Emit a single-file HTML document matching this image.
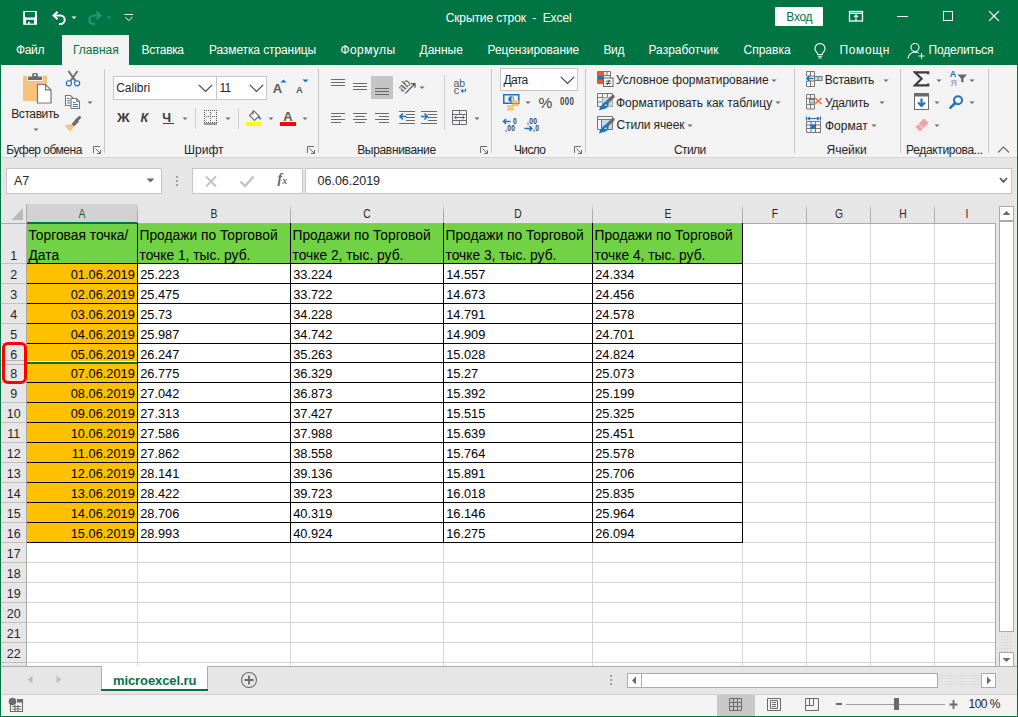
<!DOCTYPE html><html><head><meta charset="utf-8"><style>
html,body{margin:0;padding:0;}
body{width:1018px;height:717px;position:relative;overflow:hidden;background:#017443;font-family:"Liberation Sans", sans-serif;}
.a{position:absolute;}
.t{position:absolute;white-space:pre;line-height:1;}
</style></head><body>
<svg class="a" style="left:22px;top:10px;" width="16" height="16" viewBox="0 0 16 16"><rect x="1.2" y="1" width="13.8" height="13.8" fill="#fff"/><path d="M3 2 H13 V6.5 Q13 7.5 12 7.5 H4 Q3 7.5 3 6.5 Z" fill="#017443"/><rect x="4" y="9.8" width="8" height="3.8" fill="#017443"/><rect x="6" y="11.8" width="2" height="2" fill="#fff"/></svg>
<svg class="a" style="left:51px;top:10px;" width="17" height="15" viewBox="0 0 17 15"><path d="M3 5.5 H9.5 A4.2 4.2 0 0 1 9.5 13.9 H8" fill="none" stroke="#fff" stroke-width="2"/><path d="M6.5 1.8 L2.6 5.5 L6.5 9.2" fill="none" stroke="#fff" stroke-width="2"/></svg>
<svg class="a" style="left:71px;top:16px;" width="6" height="4" viewBox="0 0 6 4"><path d="M0.5 0.5 L5.5 0.5 L3.0 3.0 Z" fill="#fff"/></svg>
<svg class="a" style="left:86px;top:10px;" width="17" height="15" viewBox="0 0 17 15"><path d="M14 5.5 H7.5 A4.2 4.2 0 0 0 7.5 13.9 H9" fill="none" stroke="#1f9a78" stroke-width="2.1"/><path d="M10.5 1.8 L14.4 5.5 L10.5 9.2" fill="none" stroke="#1f9a78" stroke-width="2.1"/></svg>
<svg class="a" style="left:106px;top:16px;" width="6" height="4" viewBox="0 0 6 4"><path d="M0.5 0.5 L5.5 0.5 L3.0 3.0 Z" fill="#1f9a78"/></svg>
<svg class="a" style="left:124px;top:13px;" width="10" height="9" viewBox="0 0 10 9"><path d="M0.5 1.5 H9" stroke="#fff" stroke-width="0.9"/><path d="M1 4 L4.75 7.6 L8.5 4" fill="none" stroke="#fff" stroke-width="1"/></svg>
<div class="t" style="left:408.6px;width:200px;top:12.43px;font-size:12px;color:#fff;font-weight:400;text-align:center;letter-spacing:-0.1px;">Скрытие строк  -  Excel</div>
<div class="a" style="left:775px;top:7px;width:48px;height:19px;background:#fff;border-radius:1px;"></div>
<div class="t" style="left:699.3px;width:200px;top:11.43px;font-size:12px;color:#017443;font-weight:400;text-align:center;letter-spacing:-0.3px;">Вход</div>
<svg class="a" style="left:848px;top:10px;" width="16" height="12" viewBox="0 0 16 12"><rect x="1.5" y="1.5" width="13" height="9.5" fill="none" stroke="#fff" stroke-width="1.3"/><path d="M1.5 3.3 H14.5" stroke="#fff" stroke-width="1.2"/><path d="M8 11 V5 M6 7 L8 5 L10 7" fill="none" stroke="#fff" stroke-width="1.1"/></svg>
<div class="a" style="left:897px;top:16px;width:11px;height:1px;background:#fff;"></div>
<div class="a" style="left:943px;top:11px;width:10px;height:10px;border:1px solid #fff;box-sizing:border-box;"></div>
<svg class="a" style="left:988px;top:10px;" width="12" height="12" viewBox="0 0 12 12"><path d="M1 1 L11 11 M11 1 L1 11" stroke="#fff" stroke-width="1.1"/></svg>
<div class="a" style="left:62px;top:35px;width:67px;height:30px;background:#f3f3f3;"></div>
<div class="t" style="left:15.899999999999999px;top:44.23px;font-size:12px;color:#fff;font-weight:400;letter-spacing:-0.3px;">Файл</div>
<div class="t" style="left:73.0px;top:44.23px;font-size:12px;color:#017443;font-weight:400;">Главная</div>
<div class="t" style="left:141.5px;top:44.23px;font-size:12px;color:#fff;font-weight:400;letter-spacing:-0.35px;">Вставка</div>
<div class="t" style="left:208.9px;top:44.23px;font-size:12px;color:#fff;font-weight:400;letter-spacing:-0.1px;">Разметка страницы</div>
<div class="t" style="left:340.5px;top:44.23px;font-size:12px;color:#fff;font-weight:400;letter-spacing:0.4px;">Формулы</div>
<div class="t" style="left:419.5px;top:44.23px;font-size:12px;color:#fff;font-weight:400;">Данные</div>
<div class="t" style="left:487.5px;top:44.23px;font-size:12px;color:#fff;font-weight:400;letter-spacing:-0.07px;">Рецензирование</div>
<div class="t" style="left:603.5px;top:44.23px;font-size:12px;color:#fff;font-weight:400;letter-spacing:-0.4px;">Вид</div>
<div class="t" style="left:648.5px;top:44.23px;font-size:12px;color:#fff;font-weight:400;">Разработчик</div>
<div class="t" style="left:743.5px;top:44.23px;font-size:12px;color:#fff;font-weight:400;">Справка</div>
<div class="t" style="left:839.5px;top:44.23px;font-size:12px;color:#fff;font-weight:400;letter-spacing:0.65px;">Помощн</div>
<div class="t" style="left:928.5px;top:44.23px;font-size:12px;color:#fff;font-weight:400;letter-spacing:-0.15px;">Поделиться</div>
<svg class="a" style="left:812px;top:42px;" width="16" height="18" viewBox="0 0 16 18"><path d="M8 1.5 A5 5 0 0 1 11.2 10.3 Q10.3 11.2 10.3 12.5 H5.7 Q5.7 11.2 4.8 10.3 A5 5 0 0 1 8 1.5 Z" fill="none" stroke="#fff" stroke-width="1.1"/><path d="M5.8 14.2 H10.2 M6.5 16 H9.5" stroke="#fff" stroke-width="1.1"/></svg>
<svg class="a" style="left:907px;top:42px;" width="19" height="18" viewBox="0 0 19 18"><circle cx="8" cy="5.5" r="4" fill="none" stroke="#fff" stroke-width="1.1"/><path d="M1 16.5 Q2 10.5 8 10 Q10 10 11.5 11" fill="none" stroke="#fff" stroke-width="1.1"/><path d="M14.5 11 V17 M11.5 14 H17.5" stroke="#fff" stroke-width="1.1"/></svg>
<div class="a" style="left:1px;top:65px;width:1016px;height:92px;background:#f3f3f3;"></div>
<div class="a" style="left:1px;top:157px;width:1016px;height:1px;background:#d5d5d5;"></div>
<div class="a" style="left:1px;top:158px;width:1016px;height:46px;background:#e6e6e6;"></div>
<div class="a" style="left:104px;top:69px;width:1px;height:84px;background:#c8c8c8;"></div>
<div class="a" style="left:318px;top:69px;width:1px;height:84px;background:#c8c8c8;"></div>
<div class="a" style="left:491px;top:69px;width:1px;height:84px;background:#c8c8c8;"></div>
<div class="a" style="left:585px;top:69px;width:1px;height:84px;background:#c8c8c8;"></div>
<div class="a" style="left:794px;top:69px;width:1px;height:84px;background:#c8c8c8;"></div>
<div class="a" style="left:900px;top:69px;width:1px;height:84px;background:#c8c8c8;"></div>
<div class="a" style="left:988px;top:69px;width:1px;height:84px;background:#c8c8c8;"></div>
<div class="t" style="left:6.3px;top:143.93px;font-size:12px;color:#262626;font-weight:400;letter-spacing:-0.5px;">Буфер обмена</div>
<div class="t" style="left:184.0px;top:143.93px;font-size:12px;color:#262626;font-weight:400;">Шрифт</div>
<div class="t" style="left:357.2px;top:143.93px;font-size:12px;color:#262626;font-weight:400;letter-spacing:-0.33px;">Выравнивание</div>
<div class="t" style="left:514.0px;top:143.93px;font-size:12px;color:#262626;font-weight:400;letter-spacing:-0.65px;">Число</div>
<div class="t" style="left:674.0px;top:143.93px;font-size:12px;color:#262626;font-weight:400;letter-spacing:-0.6px;">Стили</div>
<div class="t" style="left:826.5px;top:143.93px;font-size:12px;color:#262626;font-weight:400;">Ячейки</div>
<div class="t" style="left:906.0px;top:143.93px;font-size:12px;color:#262626;font-weight:400;letter-spacing:-0.33px;">Редактирова...</div>
<svg class="a" style="left:93px;top:146px;" width="9" height="8" viewBox="0 0 9 8"><path d="M0.5 7 V0.5 H7" fill="none" stroke="#6a6a6a" stroke-width="1"/><path d="M2.5 2.5 L7.5 7.5 M4 7.5 H7.5 V4" fill="none" stroke="#6a6a6a" stroke-width="1"/></svg>
<svg class="a" style="left:307px;top:146px;" width="9" height="8" viewBox="0 0 9 8"><path d="M0.5 7 V0.5 H7" fill="none" stroke="#6a6a6a" stroke-width="1"/><path d="M2.5 2.5 L7.5 7.5 M4 7.5 H7.5 V4" fill="none" stroke="#6a6a6a" stroke-width="1"/></svg>
<svg class="a" style="left:480px;top:146px;" width="9" height="8" viewBox="0 0 9 8"><path d="M0.5 7 V0.5 H7" fill="none" stroke="#6a6a6a" stroke-width="1"/><path d="M2.5 2.5 L7.5 7.5 M4 7.5 H7.5 V4" fill="none" stroke="#6a6a6a" stroke-width="1"/></svg>
<svg class="a" style="left:574px;top:146px;" width="9" height="8" viewBox="0 0 9 8"><path d="M0.5 7 V0.5 H7" fill="none" stroke="#6a6a6a" stroke-width="1"/><path d="M2.5 2.5 L7.5 7.5 M4 7.5 H7.5 V4" fill="none" stroke="#6a6a6a" stroke-width="1"/></svg>
<svg class="a" style="left:22px;top:72px;" width="31" height="32" viewBox="0 0 31 32"><rect x="1" y="3.8" width="24" height="25.2" rx="1" fill="#f7c37b"/>
<rect x="5.2" y="3" width="15.6" height="6" fill="#f3f3f3"/>
<rect x="6" y="4.4" width="14" height="3.6" rx="0.8" fill="#6a6a6a"/>
<rect x="10.2" y="1" width="5.6" height="4.5" rx="1.5" fill="#6a6a6a"/><rect x="12" y="2.2" width="2" height="1.8" fill="#f3f3f3"/>
<path d="M15.5 12.5 H23.5 L29 18 V31 H15.5 Z" fill="#fff" stroke="#777" stroke-width="1.2"/>
<path d="M23.5 12.5 V17.8 H29" fill="none" stroke="#777" stroke-width="1.2"/></svg>
<div class="t" style="left:11.2px;top:107.73px;font-size:12px;color:#262626;font-weight:400;letter-spacing:-0.4px;">Вставить</div>
<svg class="a" style="left:33px;top:128px;" width="6" height="4" viewBox="0 0 6 4"><path d="M0.5 0.5 L5.5 0.5 L3.0 3.0 Z" fill="#6a6a6a"/></svg>
<svg class="a" style="left:65px;top:70px;" width="16" height="17" viewBox="0 0 16 17"><path d="M3.5 1 L10.5 11 M12.5 1 L5.5 11" stroke="#707070" stroke-width="2"/><circle cx="3.9" cy="13.3" r="2.6" fill="#f3f3f3" stroke="#1e73be" stroke-width="1.1"/><circle cx="12.1" cy="13.3" r="2.6" fill="#f3f3f3" stroke="#1e73be" stroke-width="1.1"/></svg>
<svg class="a" style="left:64px;top:94px;" width="17" height="16" viewBox="0 0 17 16"><path d="M1.5 1.5 H6.5 L8.5 3.5 V11.5 H1.5 Z" fill="#fff" stroke="#777" stroke-width="1.1"/>
<path d="M3 4.5 H5.5 M3 6.8 H6.5 M3 9 H6.5" stroke="#1e73be" stroke-width="0.9"/>
<path d="M7 4.5 H12.5 L15.5 7.5 V14.5 H7 Z" fill="#fff" stroke="#777" stroke-width="1.1"/>
<path d="M12.5 4.5 V7.5 H15.5" fill="none" stroke="#777" stroke-width="0.9"/>
<path d="M9 8.5 H11.5 M9 10.5 H14 M9 12.5 H14" stroke="#1e73be" stroke-width="0.9"/></svg>
<svg class="a" style="left:87px;top:101px;" width="6" height="4" viewBox="0 0 6 4"><path d="M0.5 0.5 L5.5 0.5 L3.0 3.0 Z" fill="#6a6a6a"/></svg>
<svg class="a" style="left:64px;top:116px;" width="18" height="17" viewBox="0 0 18 17"><path d="M15.5 1.5 L12 5" stroke="#6a6a6a" stroke-width="3" stroke-linecap="round"/><path d="M12.5 3 L15 5.5 L10 10.5 L7.5 8 Z" fill="#6a6a6a"/><path d="M7.5 8 L10 10.5 L6 16 L0.8 9.5 Z" fill="#f7c37b"/></svg>
<div class="a" style="left:113px;top:76px;width:104px;height:24px;background:#fff;border:1px solid #c6c6c6;box-sizing:border-box;"></div>
<div class="a" style="left:216px;top:76px;width:51px;height:24px;background:#fff;border:1px solid #c6c6c6;box-sizing:border-box;"></div>
<div class="t" style="left:116.2px;top:81.73px;font-size:12px;color:#262626;font-weight:400;">Calibri</div>
<div class="t" style="left:219.5px;top:81.73px;font-size:12px;color:#262626;font-weight:400;letter-spacing:-0.8px;">11</div>
<svg class="a" style="left:197.5px;top:84px;" width="15" height="9" viewBox="0 0 15 9"><path d="M0.8 0.8 L7.5 7.5 L14.2 0.8" fill="none" stroke="#444" stroke-width="1.2"/></svg>
<svg class="a" style="left:249.0px;top:84px;" width="15" height="9" viewBox="0 0 15 9"><path d="M0.8 0.8 L7.5 7.5 L14.2 0.8" fill="none" stroke="#444" stroke-width="1.2"/></svg>
<div class="t" style="left:272.8px;top:81.90px;font-size:13px;color:#5a5a5a;font-weight:700;">A</div>
<svg class="a" style="left:280px;top:79px;" width="7" height="4" viewBox="0 0 7 4"><path d="M0.5 3.5 L3.5 0.5 L6.5 3.5 Z" fill="#1e73be"/></svg>
<div class="t" style="left:296px;top:84.76px;font-size:9.5px;color:#5a5a5a;font-weight:700;">A</div>
<svg class="a" style="left:302px;top:79px;" width="7" height="4" viewBox="0 0 7 4"><path d="M0.5 0.5 L6.5 0.5 L3.5 3.5 Z" fill="#1e73be"/></svg>
<div class="t" style="left:117.3px;top:111.67px;font-size:12.5px;color:#3c3c3c;font-weight:700;transform:scaleX(1.12);transform-origin:0 0;">Ж</div>
<div class="t" style="left:140.5px;top:111.67px;font-size:12.5px;color:#3c3c3c;font-weight:700;font-style:italic;">К</div>
<div class="t" style="left:162.3px;top:111.67px;font-size:12.5px;color:#3c3c3c;font-weight:700;">Ч</div>
<div class="a" style="left:162.5px;top:123px;width:11px;height:1.2px;background:#3c3c3c;"></div>
<svg class="a" style="left:181.5px;top:117px;" width="6" height="4" viewBox="0 0 6 4"><path d="M0.5 0.5 L5.5 0.5 L3.0 3.0 Z" fill="#6a6a6a"/></svg>
<div class="a" style="left:195px;top:108px;width:1px;height:21px;background:#d0d0d0;"></div>
<svg class="a" style="left:204px;top:110px;" width="14" height="15" viewBox="0 0 14 15"><path d="M0 0.5 H14 M0 6.5 H14 M0 12.5 H14 M0.5 0 V13 M6.5 0 V13 M12.5 0 V13" fill="none" stroke="#555" stroke-width="1" stroke-dasharray="1 1"/><path d="M0 14 H13" stroke="#6a6a6a" stroke-width="1.3"/></svg>
<svg class="a" style="left:225px;top:117px;" width="6" height="4" viewBox="0 0 6 4"><path d="M0.5 0.5 L5.5 0.5 L3.0 3.0 Z" fill="#6a6a6a"/></svg>
<div class="a" style="left:238px;top:108px;width:1px;height:21px;background:#d0d0d0;"></div>
<svg class="a" style="left:245px;top:109px;" width="18" height="18" viewBox="0 0 18 18"><path d="M4.5 6.5 L9 2 L14 7 L9.5 11.5 Z" fill="#fff" stroke="#6a6a6a" stroke-width="1.1"/><path d="M8 1.5 V6" stroke="#6a6a6a" stroke-width="1"/><path d="M14.5 7 Q16.5 9 15.5 11 Q14 9.5 13 9" fill="#1e73be"/><rect x="0.8" y="13" width="16" height="4" fill="#ffff00"/></svg>
<svg class="a" style="left:267.5px;top:117px;" width="6" height="4" viewBox="0 0 6 4"><path d="M0.5 0.5 L5.5 0.5 L3.0 3.0 Z" fill="#6a6a6a"/></svg>
<div class="t" style="left:283.3px;top:110.30px;font-size:13px;color:#5a5a5a;font-weight:700;">A</div>
<div class="a" style="left:280px;top:122px;width:16px;height:4px;background:#ff0000;"></div>
<svg class="a" style="left:301.5px;top:117px;" width="6" height="4" viewBox="0 0 6 4"><path d="M0.5 0.5 L5.5 0.5 L3.0 3.0 Z" fill="#6a6a6a"/></svg>
<div class="a" style="left:331px;top:78.5px;width:14px;height:1.3px;background:#6a6a6a;"></div>
<div class="a" style="left:331px;top:81.5px;width:14px;height:1.3px;background:#6a6a6a;"></div>
<div class="a" style="left:331px;top:84.5px;width:14px;height:1.3px;background:#6a6a6a;"></div>
<div class="a" style="left:353px;top:82.5px;width:14px;height:1.3px;background:#6a6a6a;"></div>
<div class="a" style="left:353px;top:85.5px;width:14px;height:1.3px;background:#6a6a6a;"></div>
<div class="a" style="left:353px;top:88.5px;width:14px;height:1.3px;background:#6a6a6a;"></div>
<div class="a" style="left:371px;top:76px;width:22px;height:23px;background:#c5c5c5;"></div>
<div class="a" style="left:375px;top:87.5px;width:14px;height:1.3px;background:#6a6a6a;"></div>
<div class="a" style="left:375px;top:90.5px;width:14px;height:1.3px;background:#6a6a6a;"></div>
<div class="a" style="left:375px;top:93.5px;width:14px;height:1.3px;background:#6a6a6a;"></div>
<svg class="a" style="left:397px;top:77px;" width="20" height="19" viewBox="0 0 20 19"><text transform="translate(5.2,15.6) rotate(-45)" font-family="Liberation Sans" font-size="11.5" fill="#555">ab</text><path d="M8.2 16.6 L17.6 7 M13.8 6.6 H18 V10.8" fill="none" stroke="#555" stroke-width="1.2"/></svg>
<svg class="a" style="left:419px;top:86px;" width="6" height="4" viewBox="0 0 6 4"><path d="M0.5 0.5 L5.5 0.5 L3.0 3.0 Z" fill="#6a6a6a"/></svg>
<div class="a" style="left:331px;top:112.5px;width:14px;height:1.3px;background:#6a6a6a;"></div>
<div class="a" style="left:331px;top:115.5px;width:10px;height:1.3px;background:#6a6a6a;"></div>
<div class="a" style="left:331px;top:118.5px;width:14px;height:1.3px;background:#6a6a6a;"></div>
<div class="a" style="left:331px;top:121.5px;width:10px;height:1.3px;background:#6a6a6a;"></div>
<div class="a" style="left:353px;top:112.5px;width:14px;height:1.3px;background:#6a6a6a;"></div>
<div class="a" style="left:355px;top:115.5px;width:10px;height:1.3px;background:#6a6a6a;"></div>
<div class="a" style="left:353px;top:118.5px;width:14px;height:1.3px;background:#6a6a6a;"></div>
<div class="a" style="left:355px;top:121.5px;width:10px;height:1.3px;background:#6a6a6a;"></div>
<div class="a" style="left:375px;top:112.5px;width:14px;height:1.3px;background:#6a6a6a;"></div>
<div class="a" style="left:379px;top:115.5px;width:10px;height:1.3px;background:#6a6a6a;"></div>
<div class="a" style="left:375px;top:118.5px;width:14px;height:1.3px;background:#6a6a6a;"></div>
<div class="a" style="left:379px;top:121.5px;width:10px;height:1.3px;background:#6a6a6a;"></div>
<div class="a" style="left:399px;top:110.5px;width:16px;height:1.3px;background:#6a6a6a;"></div>
<div class="a" style="left:399px;top:122.5px;width:16px;height:1.3px;background:#6a6a6a;"></div>
<div class="a" style="left:406px;top:113.5px;width:9px;height:1.3px;background:#6a6a6a;"></div>
<div class="a" style="left:406px;top:116.5px;width:9px;height:1.3px;background:#6a6a6a;"></div>
<div class="a" style="left:406px;top:119.5px;width:9px;height:1.3px;background:#6a6a6a;"></div>
<svg class="a" style="left:399px;top:112px;" width="8" height="9" viewBox="0 0 8 9"><path d="M7.5 4.5 H1 M4 1.5 L1 4.5 L4 7.5" fill="none" stroke="#1e73be" stroke-width="1.6"/></svg>
<div class="a" style="left:421px;top:110.5px;width:16px;height:1.3px;background:#6a6a6a;"></div>
<div class="a" style="left:421px;top:122.5px;width:16px;height:1.3px;background:#6a6a6a;"></div>
<div class="a" style="left:428px;top:113.5px;width:9px;height:1.3px;background:#6a6a6a;"></div>
<div class="a" style="left:428px;top:116.5px;width:9px;height:1.3px;background:#6a6a6a;"></div>
<div class="a" style="left:428px;top:119.5px;width:9px;height:1.3px;background:#6a6a6a;"></div>
<svg class="a" style="left:421px;top:112px;" width="8" height="9" viewBox="0 0 8 9"><path d="M0 4.5 H6.5 M3.5 1.5 L6.5 4.5 L3.5 7.5" fill="none" stroke="#1e73be" stroke-width="1.6"/></svg>
<div class="a" style="left:444px;top:75px;width:1px;height:55px;background:#d0d0d0;"></div>
<div class="t" style="left:453.6px;top:78.13px;font-size:10.5px;color:#555;font-weight:400;letter-spacing:-0.3px;">ab</div>
<div class="t" style="left:453.8px;top:84.56px;font-size:11px;color:#555;font-weight:400;">c</div>
<svg class="a" style="left:460px;top:88px;" width="7" height="6" viewBox="0 0 7 6"><path d="M5.5 0.5 V3 H1.5 M3 1.5 L1.5 3 L3 4.5" fill="none" stroke="#1e73be" stroke-width="1.2"/></svg>
<svg class="a" style="left:452px;top:110px;" width="15" height="15" viewBox="0 0 15 15"><path d="M0.5 0.5 H14.5 V14.5 H0.5 Z M0.5 4.5 H14.5 M0.5 10.5 H14.5 M7.5 0.5 V4.5 M7.5 10.5 V14.5" fill="none" stroke="#6a6a6a" stroke-width="1"/><path d="M2.5 7.5 H12.5 M4.5 5.8 L2.5 7.5 L4.5 9.2 M10.5 5.8 L12.5 7.5 L10.5 9.2" fill="none" stroke="#1e73be" stroke-width="1"/></svg>
<svg class="a" style="left:474px;top:117px;" width="6" height="4" viewBox="0 0 6 4"><path d="M0.5 0.5 L5.5 0.5 L3.0 3.0 Z" fill="#6a6a6a"/></svg>
<div class="a" style="left:500px;top:68px;width:78px;height:23px;background:#fff;border:1px solid #c6c6c6;box-sizing:border-box;"></div>
<div class="t" style="left:503.5px;top:74.23px;font-size:12px;color:#262626;font-weight:400;letter-spacing:-0.6px;">Дата</div>
<svg class="a" style="left:560px;top:76px;" width="15" height="9" viewBox="0 0 15 9"><path d="M0.8 0.8 L7.5 7.5 L14.2 0.8" fill="none" stroke="#444" stroke-width="1.2"/></svg>
<svg class="a" style="left:502px;top:93px;" width="18" height="18" viewBox="0 0 18 18"><rect x="1.75" y="1.75" width="15" height="8.5" fill="none" stroke="#1e73be" stroke-width="1.5"/>
<path d="M9.5 3.5 A2.6 2.6 0 1 0 9.5 8.7 Z" fill="#1e73be"/><circle cx="9.2" cy="6.1" r="2.6" fill="none" stroke="#1e73be" stroke-width="0.8"/>
<rect x="10" y="7.5" width="7" height="2.6" rx="1.2" fill="#f7c37b"/><rect x="10" y="10.6" width="7" height="2.4" rx="1.2" fill="#f7c37b"/><rect x="5" y="12.2" width="7" height="2.4" rx="1.2" fill="#f7c37b"/><rect x="5" y="15" width="7" height="2.4" rx="1.2" fill="#f7c37b"/></svg>
<svg class="a" style="left:525px;top:101px;" width="6" height="4" viewBox="0 0 6 4"><path d="M0.5 0.5 L5.5 0.5 L3.0 3.0 Z" fill="#6a6a6a"/></svg>
<div class="t" style="left:538.5px;top:94.78px;font-size:15.5px;color:#444;font-weight:400;">%</div>
<div class="t" style="left:559.5px;top:96.69px;font-size:10px;color:#444;font-weight:700;transform:scaleX(0.78);transform-origin:0 0;letter-spacing:0.6px;">000</div>
<div class="t" style="left:512.8px;top:116.89px;font-size:8.5px;color:#444;font-weight:700;transform:scaleX(0.8);transform-origin:0 0;">0</div>
<div class="t" style="left:504.5px;top:124.19px;font-size:8.5px;color:#444;font-weight:700;transform:scaleX(0.8);transform-origin:0 0;letter-spacing:0.3px;">,00</div>
<svg class="a" style="left:502px;top:118px;" width="9" height="7" viewBox="0 0 9 7"><path d="M8.5 3.5 H1.5 M4 1 L1.5 3.5 L4 6" fill="none" stroke="#1e73be" stroke-width="1.5"/></svg>
<div class="t" style="left:526.5px;top:116.89px;font-size:8.5px;color:#444;font-weight:700;transform:scaleX(0.8);transform-origin:0 0;letter-spacing:0.3px;">,00</div>
<div class="t" style="left:532.5px;top:124.19px;font-size:8.5px;color:#444;font-weight:700;transform:scaleX(0.8);transform-origin:0 0;letter-spacing:0.3px;">,0</div>
<svg class="a" style="left:524px;top:125px;" width="10" height="7" viewBox="0 0 10 7"><path d="M0.5 3.5 H8 M5.5 1 L8 3.5 L5.5 6" fill="none" stroke="#1e73be" stroke-width="1.5"/></svg>
<svg class="a" style="left:597px;top:71px;" width="18" height="18" viewBox="0 0 18 18"><path d="M0.5 0.5 H13.5 V12.5 H0.5 Z M0.5 4.5 H13.5 M0.5 8.5 H6.5 M6.5 0.5 V12.5 M10 0.5 V4.5" fill="none" stroke="#777" stroke-width="1"/>
<rect x="1" y="1" width="5.5" height="3.5" fill="#f05a22"/><rect x="1" y="5" width="5.5" height="3.5" fill="#1e73be"/><rect x="1" y="9" width="5.5" height="3.5" fill="#f05a22"/>
<rect x="6.5" y="7" width="9.5" height="8.5" fill="#fff" stroke="#666" stroke-width="1"/><path d="M8.8 10.2 H13.8 M8.8 12.5 H13.8 M12.5 8.8 L10 14" stroke="#333" stroke-width="0.9"/></svg>
<svg class="a" style="left:597px;top:93px;" width="18" height="18" viewBox="0 0 18 18"><path d="M0.5 0.5 H15.5 V13.5 H0.5 Z M0.5 4.5 H15.5 M0.5 9 H10 M5.5 0.5 V13.5 M10.5 0.5 V9" fill="none" stroke="#777" stroke-width="1"/><rect x="5.5" y="4.5" width="10" height="9" fill="#c3dbe8"/><path d="M16 3.5 L10.5 9" stroke="#6a6a6a" stroke-width="3.2" stroke-linecap="round"/><path d="M9 8.5 Q12 9.5 11.5 12.5 Q10 16 5 16.5 L2 17.5 Q3 13 6 10.5 Q7.5 8.8 9 8.5 Z" fill="#1e73be"/><path d="M7.5 12.5 Q9 11.5 10 12.5" stroke="#fff" stroke-width="0.9" fill="none"/></svg>
<svg class="a" style="left:597px;top:116px;" width="18" height="18" viewBox="0 0 18 18"><path d="M0.5 0.5 H15.5 V13.5 H0.5 Z M0.5 3.5 H15.5 M4.5 3.5 V13.5" fill="none" stroke="#777" stroke-width="1"/><rect x="5" y="4" width="10" height="9" fill="#c3dbe8"/><path d="M16 3.5 L10.5 9" stroke="#6a6a6a" stroke-width="3.2" stroke-linecap="round"/><path d="M9 8.5 Q12 9.5 11.5 12.5 Q10 16 5 16.5 L2 17.5 Q3 13 6 10.5 Q7.5 8.8 9 8.5 Z" fill="#1e73be"/><path d="M7.5 12.5 Q9 11.5 10 12.5" stroke="#fff" stroke-width="0.9" fill="none"/></svg>
<div class="t" style="left:616px;top:74.23px;font-size:12px;color:#262626;font-weight:400;">Условное форматирование</div>
<svg class="a" style="left:770.5px;top:79px;" width="6" height="4" viewBox="0 0 6 4"><path d="M0.5 0.5 L5.5 0.5 L3.0 3.0 Z" fill="#6a6a6a"/></svg>
<div class="t" style="left:616px;top:97.03px;font-size:12px;color:#262626;font-weight:400;">Форматировать как таблицу</div>
<svg class="a" style="left:774.5px;top:101px;" width="6" height="4" viewBox="0 0 6 4"><path d="M0.5 0.5 L5.5 0.5 L3.0 3.0 Z" fill="#6a6a6a"/></svg>
<div class="t" style="left:616.5px;top:119.43px;font-size:12px;color:#262626;font-weight:400;letter-spacing:-0.13px;">Стили ячеек</div>
<svg class="a" style="left:687px;top:124px;" width="6" height="4" viewBox="0 0 6 4"><path d="M0.5 0.5 L5.5 0.5 L3.0 3.0 Z" fill="#6a6a6a"/></svg>
<svg class="a" style="left:805px;top:70px;" width="18" height="18" viewBox="0 0 18 18"><path d="M1.5 1.5 H9.5 V6 H1.5 Z M5.5 1.5 V6 M1.5 11 H9.5 V16.5 H1.5 Z M5.5 11 V16.5" fill="none" stroke="#777" stroke-width="1"/>
<rect x="9.5" y="6.5" width="7.5" height="4" fill="#c3dbe8" stroke="#777" stroke-width="1"/><path d="M13.25 6.5 V10.5" stroke="#777" stroke-width="1"/>
<path d="M8.5 8.5 H2 M4.5 6 L2 8.5 L4.5 11" fill="none" stroke="#1e73be" stroke-width="1.7"/></svg>
<svg class="a" style="left:805px;top:93px;" width="18" height="18" viewBox="0 0 18 18"><path d="M1.5 1.5 H9.5 V5.5 H1.5 Z M5.5 1.5 V5.5 M1.5 11.5 H9.5 V16 H1.5 Z M5.5 11.5 V16 M1.5 5.5 V11.5" fill="none" stroke="#777" stroke-width="1"/>
<rect x="4.5" y="6.5" width="5" height="3.5" fill="#c3dbe8" stroke="#777" stroke-width="1"/>
<path d="M10 5 L16.5 11 M16.5 5 L10 11" stroke="#f26b3a" stroke-width="1.5"/></svg>
<svg class="a" style="left:805px;top:116px;" width="18" height="18" viewBox="0 0 18 18"><path d="M1.5 5.5 H15.5 V16.5 H1.5 Z M1.5 9 H15.5 M1.5 12.5 H15.5 M6 5.5 V16.5 M10.5 5.5 V16.5" fill="none" stroke="#777" stroke-width="1"/>
<rect x="5.5" y="8.5" width="5.5" height="4.5" fill="#1e73be"/>
<path d="M3 2.5 H14 M5 1 L3 2.5 L5 4 M12 1 L14 2.5 L12 4 M1.5 0.5 V4.5 M15.5 0.5 V4.5" fill="none" stroke="#1e73be" stroke-width="1.1"/></svg>
<div class="t" style="left:824.8px;top:74.23px;font-size:12px;color:#262626;font-weight:400;letter-spacing:-0.2px;">Вставить</div>
<svg class="a" style="left:882.5px;top:79px;" width="6" height="4" viewBox="0 0 6 4"><path d="M0.5 0.5 L5.5 0.5 L3.0 3.0 Z" fill="#6a6a6a"/></svg>
<div class="t" style="left:825px;top:97.23px;font-size:12px;color:#262626;font-weight:400;letter-spacing:-0.25px;">Удалить</div>
<svg class="a" style="left:878.5px;top:101px;" width="6" height="4" viewBox="0 0 6 4"><path d="M0.5 0.5 L5.5 0.5 L3.0 3.0 Z" fill="#6a6a6a"/></svg>
<div class="t" style="left:825px;top:120.03px;font-size:12px;color:#262626;font-weight:400;">Формат</div>
<svg class="a" style="left:870.5px;top:124px;" width="6" height="4" viewBox="0 0 6 4"><path d="M0.5 0.5 L5.5 0.5 L3.0 3.0 Z" fill="#6a6a6a"/></svg>
<svg class="a" style="left:913px;top:71px;" width="17" height="16" viewBox="0 0 17 16"><path d="M15.2 3.3 V1.4 H2 L8.6 7.8 L2 14.3 H15.2 V12.4" fill="none" stroke="#3c3c3c" stroke-width="2.2"/></svg>
<svg class="a" style="left:935.5px;top:79px;" width="6" height="4" viewBox="0 0 6 4"><path d="M0.5 0.5 L5.5 0.5 L3.0 3.0 Z" fill="#6a6a6a"/></svg>
<div class="t" style="left:949.8px;top:70.03px;font-size:9px;color:#1e73be;font-weight:700;">A</div>
<div class="t" style="left:950.5px;top:79.03px;font-size:9px;color:#b39fd0;font-weight:700;">Я</div>
<svg class="a" style="left:957px;top:74px;" width="11" height="9" viewBox="0 0 11 9"><path d="M0.5 0.5 H10 L6.5 4.5 V8.5 L4 7.5 V4.5 Z" fill="#6a6a6a"/></svg>
<svg class="a" style="left:968.5px;top:79px;" width="6" height="4" viewBox="0 0 6 4"><path d="M0.5 0.5 L5.5 0.5 L3.0 3.0 Z" fill="#6a6a6a"/></svg>
<svg class="a" style="left:914px;top:93px;" width="16" height="18" viewBox="0 0 16 18"><rect x="0.5" y="0.5" width="14" height="16" fill="#fff" stroke="#6a6a6a" stroke-width="1"/><rect x="0.5" y="0.5" width="14" height="3" fill="#6a6a6a"/><path d="M7.5 5.5 V13 M4 9.5 L7.5 13 L11 9.5" fill="none" stroke="#1e73be" stroke-width="2.2"/></svg>
<svg class="a" style="left:934px;top:101px;" width="6" height="4" viewBox="0 0 6 4"><path d="M0.5 0.5 L5.5 0.5 L3.0 3.0 Z" fill="#6a6a6a"/></svg>
<svg class="a" style="left:949px;top:95px;" width="15" height="14" viewBox="0 0 15 14"><circle cx="9" cy="5.2" r="4" fill="none" stroke="#1e73be" stroke-width="2"/><path d="M6.2 8 L1.5 12.7" stroke="#1e73be" stroke-width="2.6" stroke-linecap="round"/></svg>
<svg class="a" style="left:968.5px;top:101px;" width="6" height="4" viewBox="0 0 6 4"><path d="M0.5 0.5 L5.5 0.5 L3.0 3.0 Z" fill="#6a6a6a"/></svg>
<svg class="a" style="left:914px;top:117px;" width="16" height="16" viewBox="0 0 16 16"><path d="M10 1.5 L14.5 6 L6 14.5 L1.5 10 Z" fill="#f4a0aa"/><path d="M4.5 7 L9 11.5" stroke="#f3f3f3" stroke-width="1"/></svg>
<svg class="a" style="left:934px;top:124px;" width="6" height="4" viewBox="0 0 6 4"><path d="M0.5 0.5 L5.5 0.5 L3.0 3.0 Z" fill="#6a6a6a"/></svg>
<svg class="a" style="left:997px;top:146px;" width="13" height="8" viewBox="0 0 13 8"><path d="M1 6.5 L6.5 1 L12 6.5" fill="none" stroke="#6a6a6a" stroke-width="1.1"/></svg>
<div class="a" style="left:6px;top:168px;width:156px;height:26px;background:#fff;border:1px solid #c6c6c6;box-sizing:border-box;"></div>
<div class="t" style="left:14px;top:175.37px;font-size:12.5px;color:#262626;font-weight:400;">A7</div>
<svg class="a" style="left:146px;top:178px;" width="9" height="5" viewBox="0 0 9 5"><path d="M0.5 0.5 H8.5 L4.5 4.5 Z" fill="#6a6a6a"/></svg>
<div class="a" style="left:176px;top:176px;width:2px;height:2px;background:#a0a0a0;"></div>
<div class="a" style="left:176px;top:180px;width:2px;height:2px;background:#a0a0a0;"></div>
<div class="a" style="left:176px;top:184px;width:2px;height:2px;background:#a0a0a0;"></div>
<div class="a" style="left:192px;top:168px;width:111px;height:26px;background:#fff;border:1px solid #c6c6c6;box-sizing:border-box;"></div>
<svg class="a" style="left:204px;top:175px;" width="14" height="13" viewBox="0 0 14 13"><path d="M2 1.5 L12 11.5 M12 1.5 L2 11.5" stroke="#c2c2c2" stroke-width="1.9"/></svg>
<svg class="a" style="left:239px;top:175px;" width="16" height="13" viewBox="0 0 16 13"><path d="M1.5 6.5 L6 11 L14.5 1.5" fill="none" stroke="#c2c2c2" stroke-width="2.4"/></svg>
<div class="t" style="left:277.5px;top:172px;font-family:'Liberation Serif',serif;font-style:italic;font-weight:700;font-size:14px;color:#666;">f<span style="font-size:10px;position:relative;top:1px">x</span></div>
<div class="a" style="left:305px;top:168px;width:707px;height:26px;background:#fff;border:1px solid #c6c6c6;box-sizing:border-box;"></div>
<div class="t" style="left:317.5px;top:175.37px;font-size:12.5px;color:#262626;font-weight:400;">06.06.2019</div>
<svg class="a" style="left:999px;top:177px;" width="9" height="7" viewBox="0 0 9 7"><path d="M1 1 L4.5 4.8 L8 1" fill="none" stroke="#5a5a5a" stroke-width="1.8"/></svg>
<div class="a" style="left:27px;top:224px;width:968px;height:443px;background:#fff;"></div>
<div class="a" style="left:1px;top:204px;width:994px;height:19px;background:#e6e6e6;"></div>
<div class="a" style="left:1px;top:224px;width:25px;height:443px;background:#e6e6e6;"></div>
<div class="a" style="left:995px;top:204px;width:22px;height:463px;background:#e6e6e6;"></div>
<div class="a" style="left:27px;top:204px;width:110px;height:18px;background:#d2d2d2;"></div>
<div class="a" style="left:1px;top:223px;width:994px;height:1px;background:#ababab;"></div>
<div class="a" style="left:26px;top:222px;width:111px;height:2px;background:#017443;"></div>
<div class="a" style="left:137px;top:204px;width:1px;height:19px;background:linear-gradient(#e6e6e6, #ababab 40%, #ababab);"></div>
<div class="a" style="left:290px;top:204px;width:1px;height:19px;background:linear-gradient(#e6e6e6, #ababab 40%, #ababab);"></div>
<div class="a" style="left:443px;top:204px;width:1px;height:19px;background:linear-gradient(#e6e6e6, #ababab 40%, #ababab);"></div>
<div class="a" style="left:592px;top:204px;width:1px;height:19px;background:linear-gradient(#e6e6e6, #ababab 40%, #ababab);"></div>
<div class="a" style="left:742px;top:204px;width:1px;height:19px;background:linear-gradient(#e6e6e6, #ababab 40%, #ababab);"></div>
<div class="a" style="left:806px;top:204px;width:1px;height:19px;background:linear-gradient(#e6e6e6, #ababab 40%, #ababab);"></div>
<div class="a" style="left:870px;top:204px;width:1px;height:19px;background:linear-gradient(#e6e6e6, #ababab 40%, #ababab);"></div>
<div class="a" style="left:934px;top:204px;width:1px;height:19px;background:linear-gradient(#e6e6e6, #ababab 40%, #ababab);"></div>
<div class="a" style="left:995px;top:223px;width:1px;height:444px;background:#ababab;"></div>
<div class="a" style="left:26px;top:204px;width:1px;height:463px;background:#ababab;"></div>
<svg class="a" style="left:11px;top:207px;" width="13" height="14" viewBox="0 0 13 14"><path d="M12 1 V13 H0.5 Z" fill="#b9b9b9"/></svg>
<div class="t" style="left:-18.0px;width:200px;top:208.16px;font-size:12.6px;color:#1b5e3b;font-weight:400;text-align:center;transform:scaleX(0.82);">A</div>
<div class="t" style="left:114.0px;width:200px;top:208.16px;font-size:12.6px;color:#262626;font-weight:400;text-align:center;transform:scaleX(0.82);">B</div>
<div class="t" style="left:267.0px;width:200px;top:208.16px;font-size:12.6px;color:#262626;font-weight:400;text-align:center;transform:scaleX(0.82);">C</div>
<div class="t" style="left:418.0px;width:200px;top:208.16px;font-size:12.6px;color:#262626;font-weight:400;text-align:center;transform:scaleX(0.82);">D</div>
<div class="t" style="left:567.5px;width:200px;top:208.16px;font-size:12.6px;color:#262626;font-weight:400;text-align:center;transform:scaleX(0.82);">E</div>
<div class="t" style="left:674.5px;width:200px;top:208.16px;font-size:12.6px;color:#262626;font-weight:400;text-align:center;transform:scaleX(0.82);">F</div>
<div class="t" style="left:738.5px;width:200px;top:208.16px;font-size:12.6px;color:#262626;font-weight:400;text-align:center;transform:scaleX(0.82);">G</div>
<div class="t" style="left:802.5px;width:200px;top:208.16px;font-size:12.6px;color:#262626;font-weight:400;text-align:center;transform:scaleX(0.82);">H</div>
<div class="t" style="left:866.8px;width:200px;top:208.16px;font-size:12.6px;color:#262626;font-weight:400;text-align:center;transform:scaleX(0.82);">I</div>
<div class="a" style="left:27px;top:224px;width:715px;height:39px;background:#70d244;"></div>
<div class="a" style="left:27px;top:264px;width:110px;height:278px;background:#ffc000;"></div>
<div class="a" style="left:137px;top:224px;width:1px;height:443px;background:#d4d4d4;"></div>
<div class="a" style="left:290px;top:224px;width:1px;height:443px;background:#d4d4d4;"></div>
<div class="a" style="left:443px;top:224px;width:1px;height:443px;background:#d4d4d4;"></div>
<div class="a" style="left:592px;top:224px;width:1px;height:443px;background:#d4d4d4;"></div>
<div class="a" style="left:742px;top:224px;width:1px;height:443px;background:#d4d4d4;"></div>
<div class="a" style="left:806px;top:224px;width:1px;height:443px;background:#d4d4d4;"></div>
<div class="a" style="left:870px;top:224px;width:1px;height:443px;background:#d4d4d4;"></div>
<div class="a" style="left:934px;top:224px;width:1px;height:443px;background:#d4d4d4;"></div>
<div class="a" style="left:27px;top:263px;width:968px;height:1px;background:#d4d4d4;"></div>
<div class="a" style="left:27px;top:283px;width:968px;height:1px;background:#d4d4d4;"></div>
<div class="a" style="left:27px;top:303px;width:968px;height:1px;background:#d4d4d4;"></div>
<div class="a" style="left:27px;top:323px;width:968px;height:1px;background:#d4d4d4;"></div>
<div class="a" style="left:27px;top:343px;width:968px;height:1px;background:#d4d4d4;"></div>
<div class="a" style="left:27px;top:362px;width:968px;height:1px;background:#d4d4d4;"></div>
<div class="a" style="left:27px;top:382px;width:968px;height:1px;background:#d4d4d4;"></div>
<div class="a" style="left:27px;top:402px;width:968px;height:1px;background:#d4d4d4;"></div>
<div class="a" style="left:27px;top:422px;width:968px;height:1px;background:#d4d4d4;"></div>
<div class="a" style="left:27px;top:442px;width:968px;height:1px;background:#d4d4d4;"></div>
<div class="a" style="left:27px;top:462px;width:968px;height:1px;background:#d4d4d4;"></div>
<div class="a" style="left:27px;top:482px;width:968px;height:1px;background:#d4d4d4;"></div>
<div class="a" style="left:27px;top:502px;width:968px;height:1px;background:#d4d4d4;"></div>
<div class="a" style="left:27px;top:522px;width:968px;height:1px;background:#d4d4d4;"></div>
<div class="a" style="left:27px;top:542px;width:968px;height:1px;background:#d4d4d4;"></div>
<div class="a" style="left:27px;top:562px;width:968px;height:1px;background:#d4d4d4;"></div>
<div class="a" style="left:27px;top:582px;width:968px;height:1px;background:#d4d4d4;"></div>
<div class="a" style="left:27px;top:602px;width:968px;height:1px;background:#d4d4d4;"></div>
<div class="a" style="left:27px;top:622px;width:968px;height:1px;background:#d4d4d4;"></div>
<div class="a" style="left:27px;top:642px;width:968px;height:1px;background:#d4d4d4;"></div>
<div class="a" style="left:27px;top:662px;width:968px;height:1px;background:#d4d4d4;"></div>
<div class="a" style="left:1px;top:263px;width:25px;height:1px;background:#c0c0c0;"></div>
<div class="a" style="left:1px;top:283px;width:25px;height:1px;background:#c0c0c0;"></div>
<div class="a" style="left:1px;top:303px;width:25px;height:1px;background:#c0c0c0;"></div>
<div class="a" style="left:1px;top:323px;width:25px;height:1px;background:#c0c0c0;"></div>
<div class="a" style="left:1px;top:343px;width:25px;height:1px;background:#c0c0c0;"></div>
<div class="a" style="left:1px;top:360px;width:25px;height:1px;background:#b4b4b4;"></div>
<div class="a" style="left:1px;top:364px;width:25px;height:1px;background:#b4b4b4;"></div>
<div class="a" style="left:1px;top:382px;width:25px;height:1px;background:#c0c0c0;"></div>
<div class="a" style="left:1px;top:402px;width:25px;height:1px;background:#c0c0c0;"></div>
<div class="a" style="left:1px;top:422px;width:25px;height:1px;background:#c0c0c0;"></div>
<div class="a" style="left:1px;top:442px;width:25px;height:1px;background:#c0c0c0;"></div>
<div class="a" style="left:1px;top:462px;width:25px;height:1px;background:#c0c0c0;"></div>
<div class="a" style="left:1px;top:482px;width:25px;height:1px;background:#c0c0c0;"></div>
<div class="a" style="left:1px;top:502px;width:25px;height:1px;background:#c0c0c0;"></div>
<div class="a" style="left:1px;top:522px;width:25px;height:1px;background:#c0c0c0;"></div>
<div class="a" style="left:1px;top:542px;width:25px;height:1px;background:#c0c0c0;"></div>
<div class="a" style="left:1px;top:562px;width:25px;height:1px;background:#c0c0c0;"></div>
<div class="a" style="left:1px;top:582px;width:25px;height:1px;background:#c0c0c0;"></div>
<div class="a" style="left:1px;top:602px;width:25px;height:1px;background:#c0c0c0;"></div>
<div class="a" style="left:1px;top:622px;width:25px;height:1px;background:#c0c0c0;"></div>
<div class="a" style="left:1px;top:642px;width:25px;height:1px;background:#c0c0c0;"></div>
<div class="a" style="left:1px;top:662px;width:25px;height:1px;background:#c0c0c0;"></div>
<div class="a" style="left:137px;top:223px;width:1px;height:320px;background:#000;"></div>
<div class="a" style="left:290px;top:223px;width:1px;height:320px;background:#000;"></div>
<div class="a" style="left:443px;top:223px;width:1px;height:320px;background:#000;"></div>
<div class="a" style="left:592px;top:223px;width:1px;height:320px;background:#000;"></div>
<div class="a" style="left:742px;top:223px;width:1px;height:320px;background:#000;"></div>
<div class="a" style="left:27px;top:263px;width:716px;height:1px;background:#000;"></div>
<div class="a" style="left:27px;top:283px;width:716px;height:1px;background:#000;"></div>
<div class="a" style="left:27px;top:303px;width:716px;height:1px;background:#000;"></div>
<div class="a" style="left:27px;top:323px;width:716px;height:1px;background:#000;"></div>
<div class="a" style="left:27px;top:343px;width:716px;height:1px;background:#000;"></div>
<div class="a" style="left:27px;top:362px;width:716px;height:1px;background:#000;"></div>
<div class="a" style="left:27px;top:382px;width:716px;height:1px;background:#000;"></div>
<div class="a" style="left:27px;top:402px;width:716px;height:1px;background:#000;"></div>
<div class="a" style="left:27px;top:422px;width:716px;height:1px;background:#000;"></div>
<div class="a" style="left:27px;top:442px;width:716px;height:1px;background:#000;"></div>
<div class="a" style="left:27px;top:462px;width:716px;height:1px;background:#000;"></div>
<div class="a" style="left:27px;top:482px;width:716px;height:1px;background:#000;"></div>
<div class="a" style="left:27px;top:502px;width:716px;height:1px;background:#000;"></div>
<div class="a" style="left:27px;top:522px;width:716px;height:1px;background:#000;"></div>
<div class="a" style="left:27px;top:542px;width:716px;height:1px;background:#000;"></div>
<div class="t" style="left:-86.2px;width:200px;top:249.87px;font-size:12.5px;color:#262626;font-weight:400;text-align:center;">1</div>
<div class="t" style="left:-86.2px;width:200px;top:269.17px;font-size:12.5px;color:#262626;font-weight:400;text-align:center;">2</div>
<div class="t" style="left:-86.2px;width:200px;top:289.17px;font-size:12.5px;color:#262626;font-weight:400;text-align:center;">3</div>
<div class="t" style="left:-86.2px;width:200px;top:309.17px;font-size:12.5px;color:#262626;font-weight:400;text-align:center;">4</div>
<div class="t" style="left:-86.2px;width:200px;top:329.17px;font-size:12.5px;color:#262626;font-weight:400;text-align:center;">5</div>
<div class="t" style="left:-86.2px;width:200px;top:349.17px;font-size:12.5px;color:#262626;font-weight:400;text-align:center;">6</div>
<div class="t" style="left:-86.2px;width:200px;top:368.17px;font-size:12.5px;color:#262626;font-weight:400;text-align:center;">8</div>
<div class="t" style="left:-86.2px;width:200px;top:388.17px;font-size:12.5px;color:#262626;font-weight:400;text-align:center;">9</div>
<div class="t" style="left:-86.2px;width:200px;top:408.17px;font-size:12.5px;color:#262626;font-weight:400;text-align:center;">10</div>
<div class="t" style="left:-86.2px;width:200px;top:428.17px;font-size:12.5px;color:#262626;font-weight:400;text-align:center;">11</div>
<div class="t" style="left:-86.2px;width:200px;top:448.17px;font-size:12.5px;color:#262626;font-weight:400;text-align:center;">12</div>
<div class="t" style="left:-86.2px;width:200px;top:468.17px;font-size:12.5px;color:#262626;font-weight:400;text-align:center;">13</div>
<div class="t" style="left:-86.2px;width:200px;top:488.17px;font-size:12.5px;color:#262626;font-weight:400;text-align:center;">14</div>
<div class="t" style="left:-86.2px;width:200px;top:508.17px;font-size:12.5px;color:#262626;font-weight:400;text-align:center;">15</div>
<div class="t" style="left:-86.2px;width:200px;top:528.17px;font-size:12.5px;color:#262626;font-weight:400;text-align:center;">16</div>
<div class="t" style="left:-86.2px;width:200px;top:548.17px;font-size:12.5px;color:#262626;font-weight:400;text-align:center;">17</div>
<div class="t" style="left:-86.2px;width:200px;top:568.17px;font-size:12.5px;color:#262626;font-weight:400;text-align:center;">18</div>
<div class="t" style="left:-86.2px;width:200px;top:588.17px;font-size:12.5px;color:#262626;font-weight:400;text-align:center;">19</div>
<div class="t" style="left:-86.2px;width:200px;top:608.17px;font-size:12.5px;color:#262626;font-weight:400;text-align:center;">20</div>
<div class="t" style="left:-86.2px;width:200px;top:628.17px;font-size:12.5px;color:#262626;font-weight:400;text-align:center;">21</div>
<div class="t" style="left:-86.2px;width:200px;top:648.17px;font-size:12.5px;color:#262626;font-weight:400;text-align:center;">22</div>
<div class="t" style="left:28.5px;top:226.10px;font-size:13.8px;line-height:20px;color:#000;">Торговая точка/<br>Дата</div>
<div class="t" style="left:139.5px;top:226.10px;font-size:13.8px;line-height:20px;color:#000;">Продажи по Торговой<br>точке 1, тыс. руб.</div>
<div class="t" style="left:292.5px;top:226.10px;font-size:13.8px;line-height:20px;color:#000;">Продажи по Торговой<br>точке 2, тыс. руб.</div>
<div class="t" style="left:445.5px;top:226.10px;font-size:13.8px;line-height:20px;color:#000;">Продажи по Торговой<br>точке 3, тыс. руб.</div>
<div class="t" style="left:594.5px;top:226.10px;font-size:13.8px;line-height:20px;color:#000;">Продажи по Торговой<br>точке 4, тыс. руб.</div>
<div class="t" style="right:883.2px;top:269.13px;font-size:12.8px;color:#000;font-weight:400;text-align:right;">01.06.2019</div>
<div class="t" style="left:140.2px;top:269.13px;font-size:12.8px;color:#000;font-weight:400;">25.223</div>
<div class="t" style="left:293.2px;top:269.13px;font-size:12.8px;color:#000;font-weight:400;">33.224</div>
<div class="t" style="left:446.2px;top:269.13px;font-size:12.8px;color:#000;font-weight:400;">14.557</div>
<div class="t" style="left:595.2px;top:269.13px;font-size:12.8px;color:#000;font-weight:400;">24.334</div>
<div class="t" style="right:883.2px;top:289.13px;font-size:12.8px;color:#000;font-weight:400;text-align:right;">02.06.2019</div>
<div class="t" style="left:140.2px;top:289.13px;font-size:12.8px;color:#000;font-weight:400;">25.475</div>
<div class="t" style="left:293.2px;top:289.13px;font-size:12.8px;color:#000;font-weight:400;">33.722</div>
<div class="t" style="left:446.2px;top:289.13px;font-size:12.8px;color:#000;font-weight:400;">14.673</div>
<div class="t" style="left:595.2px;top:289.13px;font-size:12.8px;color:#000;font-weight:400;">24.456</div>
<div class="t" style="right:883.2px;top:309.13px;font-size:12.8px;color:#000;font-weight:400;text-align:right;">03.06.2019</div>
<div class="t" style="left:140.2px;top:309.13px;font-size:12.8px;color:#000;font-weight:400;">25.73</div>
<div class="t" style="left:293.2px;top:309.13px;font-size:12.8px;color:#000;font-weight:400;">34.228</div>
<div class="t" style="left:446.2px;top:309.13px;font-size:12.8px;color:#000;font-weight:400;">14.791</div>
<div class="t" style="left:595.2px;top:309.13px;font-size:12.8px;color:#000;font-weight:400;">24.578</div>
<div class="t" style="right:883.2px;top:329.13px;font-size:12.8px;color:#000;font-weight:400;text-align:right;">04.06.2019</div>
<div class="t" style="left:140.2px;top:329.13px;font-size:12.8px;color:#000;font-weight:400;">25.987</div>
<div class="t" style="left:293.2px;top:329.13px;font-size:12.8px;color:#000;font-weight:400;">34.742</div>
<div class="t" style="left:446.2px;top:329.13px;font-size:12.8px;color:#000;font-weight:400;">14.909</div>
<div class="t" style="left:595.2px;top:329.13px;font-size:12.8px;color:#000;font-weight:400;">24.701</div>
<div class="t" style="right:883.2px;top:349.13px;font-size:12.8px;color:#000;font-weight:400;text-align:right;">05.06.2019</div>
<div class="t" style="left:140.2px;top:349.13px;font-size:12.8px;color:#000;font-weight:400;">26.247</div>
<div class="t" style="left:293.2px;top:349.13px;font-size:12.8px;color:#000;font-weight:400;">35.263</div>
<div class="t" style="left:446.2px;top:349.13px;font-size:12.8px;color:#000;font-weight:400;">15.028</div>
<div class="t" style="left:595.2px;top:349.13px;font-size:12.8px;color:#000;font-weight:400;">24.824</div>
<div class="t" style="right:883.2px;top:368.13px;font-size:12.8px;color:#000;font-weight:400;text-align:right;">07.06.2019</div>
<div class="t" style="left:140.2px;top:368.13px;font-size:12.8px;color:#000;font-weight:400;">26.775</div>
<div class="t" style="left:293.2px;top:368.13px;font-size:12.8px;color:#000;font-weight:400;">36.329</div>
<div class="t" style="left:446.2px;top:368.13px;font-size:12.8px;color:#000;font-weight:400;">15.27</div>
<div class="t" style="left:595.2px;top:368.13px;font-size:12.8px;color:#000;font-weight:400;">25.073</div>
<div class="t" style="right:883.2px;top:388.13px;font-size:12.8px;color:#000;font-weight:400;text-align:right;">08.06.2019</div>
<div class="t" style="left:140.2px;top:388.13px;font-size:12.8px;color:#000;font-weight:400;">27.042</div>
<div class="t" style="left:293.2px;top:388.13px;font-size:12.8px;color:#000;font-weight:400;">36.873</div>
<div class="t" style="left:446.2px;top:388.13px;font-size:12.8px;color:#000;font-weight:400;">15.392</div>
<div class="t" style="left:595.2px;top:388.13px;font-size:12.8px;color:#000;font-weight:400;">25.199</div>
<div class="t" style="right:883.2px;top:408.13px;font-size:12.8px;color:#000;font-weight:400;text-align:right;">09.06.2019</div>
<div class="t" style="left:140.2px;top:408.13px;font-size:12.8px;color:#000;font-weight:400;">27.313</div>
<div class="t" style="left:293.2px;top:408.13px;font-size:12.8px;color:#000;font-weight:400;">37.427</div>
<div class="t" style="left:446.2px;top:408.13px;font-size:12.8px;color:#000;font-weight:400;">15.515</div>
<div class="t" style="left:595.2px;top:408.13px;font-size:12.8px;color:#000;font-weight:400;">25.325</div>
<div class="t" style="right:883.2px;top:428.13px;font-size:12.8px;color:#000;font-weight:400;text-align:right;">10.06.2019</div>
<div class="t" style="left:140.2px;top:428.13px;font-size:12.8px;color:#000;font-weight:400;">27.586</div>
<div class="t" style="left:293.2px;top:428.13px;font-size:12.8px;color:#000;font-weight:400;">37.988</div>
<div class="t" style="left:446.2px;top:428.13px;font-size:12.8px;color:#000;font-weight:400;">15.639</div>
<div class="t" style="left:595.2px;top:428.13px;font-size:12.8px;color:#000;font-weight:400;">25.451</div>
<div class="t" style="right:883.2px;top:448.13px;font-size:12.8px;color:#000;font-weight:400;text-align:right;">11.06.2019</div>
<div class="t" style="left:140.2px;top:448.13px;font-size:12.8px;color:#000;font-weight:400;">27.862</div>
<div class="t" style="left:293.2px;top:448.13px;font-size:12.8px;color:#000;font-weight:400;">38.558</div>
<div class="t" style="left:446.2px;top:448.13px;font-size:12.8px;color:#000;font-weight:400;">15.764</div>
<div class="t" style="left:595.2px;top:448.13px;font-size:12.8px;color:#000;font-weight:400;">25.578</div>
<div class="t" style="right:883.2px;top:468.13px;font-size:12.8px;color:#000;font-weight:400;text-align:right;">12.06.2019</div>
<div class="t" style="left:140.2px;top:468.13px;font-size:12.8px;color:#000;font-weight:400;">28.141</div>
<div class="t" style="left:293.2px;top:468.13px;font-size:12.8px;color:#000;font-weight:400;">39.136</div>
<div class="t" style="left:446.2px;top:468.13px;font-size:12.8px;color:#000;font-weight:400;">15.891</div>
<div class="t" style="left:595.2px;top:468.13px;font-size:12.8px;color:#000;font-weight:400;">25.706</div>
<div class="t" style="right:883.2px;top:488.13px;font-size:12.8px;color:#000;font-weight:400;text-align:right;">13.06.2019</div>
<div class="t" style="left:140.2px;top:488.13px;font-size:12.8px;color:#000;font-weight:400;">28.422</div>
<div class="t" style="left:293.2px;top:488.13px;font-size:12.8px;color:#000;font-weight:400;">39.723</div>
<div class="t" style="left:446.2px;top:488.13px;font-size:12.8px;color:#000;font-weight:400;">16.018</div>
<div class="t" style="left:595.2px;top:488.13px;font-size:12.8px;color:#000;font-weight:400;">25.835</div>
<div class="t" style="right:883.2px;top:508.13px;font-size:12.8px;color:#000;font-weight:400;text-align:right;">14.06.2019</div>
<div class="t" style="left:140.2px;top:508.13px;font-size:12.8px;color:#000;font-weight:400;">28.706</div>
<div class="t" style="left:293.2px;top:508.13px;font-size:12.8px;color:#000;font-weight:400;">40.319</div>
<div class="t" style="left:446.2px;top:508.13px;font-size:12.8px;color:#000;font-weight:400;">16.146</div>
<div class="t" style="left:595.2px;top:508.13px;font-size:12.8px;color:#000;font-weight:400;">25.964</div>
<div class="t" style="right:883.2px;top:528.13px;font-size:12.8px;color:#000;font-weight:400;text-align:right;">15.06.2019</div>
<div class="t" style="left:140.2px;top:528.13px;font-size:12.8px;color:#000;font-weight:400;">28.993</div>
<div class="t" style="left:293.2px;top:528.13px;font-size:12.8px;color:#000;font-weight:400;">40.924</div>
<div class="t" style="left:446.2px;top:528.13px;font-size:12.8px;color:#000;font-weight:400;">16.275</div>
<div class="t" style="left:595.2px;top:528.13px;font-size:12.8px;color:#000;font-weight:400;">26.094</div>
<div class="a" style="left:26px;top:361px;width:111px;height:1px;background:#fff;"></div>
<div class="a" style="left:26px;top:362px;width:111px;height:2px;background:#017443;"></div>
<div class="a" style="left:2px;top:342px;width:25px;height:42px;border:3px solid #ff0000;border-radius:6px;box-sizing:border-box;"></div>
<div class="a" style="left:999px;top:206px;width:15px;height:15px;background:#fff;border:1px solid #ababab;box-sizing:border-box;"></div>
<svg class="a" style="left:1002px;top:210px;" width="9" height="6" viewBox="0 0 9 6"><path d="M0.5 5 L4.5 1 L8.5 5 Z" fill="#6a6a6a"/></svg>
<div class="a" style="left:999px;top:221px;width:15px;height:411px;background:#fff;border:1px solid #ababab;box-sizing:border-box;"></div>
<div class="a" style="left:1000px;top:632px;width:13px;height:20px;background-image:radial-gradient(circle, #cfcfcf 0.7px, transparent 0.8px);background-size:3px 3px;"></div>
<div class="a" style="left:999px;top:652px;width:15px;height:15px;background:#fff;border:1px solid #ababab;box-sizing:border-box;"></div>
<svg class="a" style="left:1002px;top:657px;" width="9" height="6" viewBox="0 0 9 6"><path d="M0.5 1 L8.5 1 L4.5 5 Z" fill="#6a6a6a"/></svg>
<div class="a" style="left:1px;top:666px;width:1016px;height:1px;background:#ababab;"></div>
<div class="a" style="left:1px;top:667px;width:1016px;height:28px;background:#e6e6e6;"></div>
<div class="a" style="left:1px;top:694px;width:1016px;height:1px;background:#d0d0d0;"></div>
<div class="a" style="left:1px;top:695px;width:1016px;height:21px;background:#f3f3f3;"></div>
<svg class="a" style="left:27px;top:675px;" width="6" height="9" viewBox="0 0 6 9"><path d="M5.5 0.5 V8.5 L0.5 4.5 Z" fill="#c0c0c0"/></svg>
<svg class="a" style="left:56px;top:675px;" width="6" height="9" viewBox="0 0 6 9"><path d="M0.5 0.5 V8.5 L5.5 4.5 Z" fill="#c0c0c0"/></svg>
<div class="a" style="left:101px;top:666px;width:107px;height:25px;background:#fff;border-left:1px solid #ababab;border-right:1px solid #ababab;box-sizing:border-box;"></div>
<div class="a" style="left:101px;top:689px;width:107px;height:2px;background:#017443;"></div>
<div class="t" style="left:113px;top:673.60px;font-size:13px;color:#017443;font-weight:700;letter-spacing:-0.1px;">microexcel.ru</div>
<svg class="a" style="left:240px;top:671px;" width="18" height="18" viewBox="0 0 18 18"><circle cx="9" cy="9" r="7.5" fill="none" stroke="#6a6a6a" stroke-width="1.1"/><path d="M9 4.5 V13.5 M4.5 9 H13.5" stroke="#6a6a6a" stroke-width="1.8"/></svg>
<div class="a" style="left:610px;top:675px;width:2px;height:2px;background:#a0a0a0;"></div>
<div class="a" style="left:610px;top:679px;width:2px;height:2px;background:#a0a0a0;"></div>
<div class="a" style="left:610px;top:683px;width:2px;height:2px;background:#a0a0a0;"></div>
<div class="a" style="left:627px;top:673px;width:15px;height:15px;background:#fff;border:1px solid #ababab;box-sizing:border-box;"></div>
<svg class="a" style="left:631px;top:676px;" width="6" height="9" viewBox="0 0 6 9"><path d="M5 0.5 V8.5 L1 4.5 Z" fill="#6a6a6a"/></svg>
<div class="a" style="left:641px;top:673px;width:297px;height:15px;background:#fff;border:1px solid #ababab;box-sizing:border-box;"></div>
<div class="a" style="left:938px;top:674px;width:43px;height:13px;background-image:radial-gradient(circle, #cfcfcf 0.7px, transparent 0.8px);background-size:3px 3px;"></div>
<div class="a" style="left:981px;top:673px;width:15px;height:15px;background:#fff;border:1px solid #ababab;box-sizing:border-box;"></div>
<svg class="a" style="left:986px;top:676px;" width="6" height="9" viewBox="0 0 6 9"><path d="M1 0.5 V8.5 L5 4.5 Z" fill="#6a6a6a"/></svg>
<svg class="a" style="left:8px;top:697px;" width="16" height="16" viewBox="0 0 16 16"><circle cx="4.5" cy="4.5" r="3.8" fill="#6a6a6a"/><path d="M2.5 7.5 V14.5 H14.5 V2.5 H9" fill="none" stroke="#6a6a6a" stroke-width="1.1"/><rect x="9" y="2.5" width="5.5" height="3" fill="#6a6a6a"/><path d="M4.5 9.5 H13 M4.5 12 H13 M7 8 V14 M10 8 V14" stroke="#6a6a6a" stroke-width="1"/></svg>
<div class="a" style="left:717px;top:695px;width:38px;height:21px;background:#c8c8c8;"></div>
<svg class="a" style="left:728px;top:697px;" width="15" height="15" viewBox="0 0 15 15"><path d="M1.5 1.5 H13.5 V13.5 H1.5 Z M1.5 5.5 H13.5 M1.5 9.5 H13.5 M5.5 1.5 V13.5 M9.5 1.5 V13.5" fill="none" stroke="#6a6a6a" stroke-width="1"/></svg>
<svg class="a" style="left:766px;top:697px;" width="16" height="15" viewBox="0 0 16 15"><path d="M1.5 1.5 H14.5 V13.5 H1.5 Z" fill="none" stroke="#6a6a6a" stroke-width="1"/><path d="M4.5 3.5 H11.5 V11.5 H4.5 Z" fill="none" stroke="#6a6a6a" stroke-width="1"/><path d="M6 5.5 H10 M6 7.5 H10 M6 9.5 H10" stroke="#6a6a6a" stroke-width="1"/></svg>
<svg class="a" style="left:805px;top:697px;" width="15" height="15" viewBox="0 0 15 15"><path d="M0.5 1.5 H13.5 V13.5 H0.5 Z" fill="none" stroke="#6a6a6a" stroke-width="1"/><path d="M4.5 1.5 V8.5 M8.5 1.5 V8.5 M0.5 8.5 H8.5" fill="none" stroke="#6a6a6a" stroke-width="1"/></svg>
<div class="a" style="left:836px;top:703px;width:6px;height:2px;background:#6a6a6a;"></div>
<div class="a" style="left:846px;top:704px;width:99px;height:1px;background:#a0a0a0;"></div>
<div class="a" style="left:894px;top:698px;width:5px;height:12px;background:#6a6a6a;"></div>
<svg class="a" style="left:949px;top:699px;" width="9" height="11" viewBox="0 0 9 11"><path d="M4.5 1 V10 M0.5 5.5 H8.5" stroke="#6a6a6a" stroke-width="1.8"/></svg>
<div class="t" style="left:968.5px;top:698.43px;font-size:12px;color:#262626;font-weight:400;letter-spacing:-0.5px;">100 %</div>
<div class="a" style="left:0px;top:0px;width:1px;height:717px;background:#017443;"></div>
<div class="a" style="left:1017px;top:0px;width:1px;height:717px;background:#017443;"></div>
<div class="a" style="left:0px;top:716px;width:1018px;height:1px;background:#017443;"></div>
</body></html>
